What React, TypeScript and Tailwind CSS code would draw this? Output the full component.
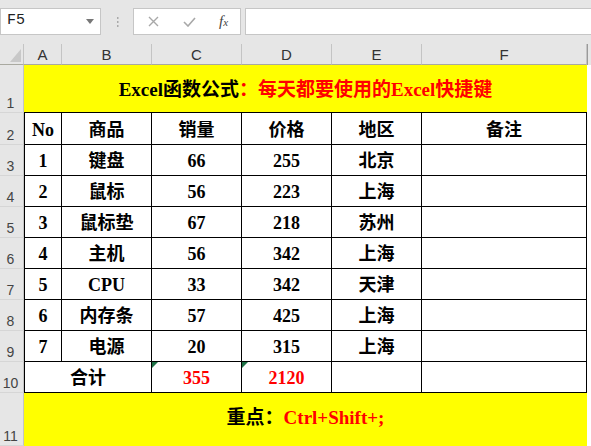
import React from "react";

const serif = "[font-family:'Liberation_Serif','Noto_Sans_CJK_SC',serif]";

type Item = { no: string; name: string; qty: string; price: string; area: string };

const items: Item[] = [
  { no: "1", name: "键盘", qty: "66", price: "255", area: "北京" },
  { no: "2", name: "鼠标", qty: "56", price: "223", area: "上海" },
  { no: "3", name: "鼠标垫", qty: "67", price: "218", area: "苏州" },
  { no: "4", name: "主机", qty: "56", price: "342", area: "上海" },
  { no: "5", name: "CPU", qty: "33", price: "342", area: "天津" },
  { no: "6", name: "内存条", qty: "57", price: "425", area: "上海" },
  { no: "7", name: "电源", qty: "20", price: "315", area: "上海" },
];

function RowHead({ n }: { n: number }) {
  return (
    <div className="flex items-end justify-center pr-[2px] bg-[#e6e6e6] border-r border-b border-r-[#c4c4c4] border-b-[#d6d6d6] text-[14px] leading-[17px] text-[#444] [font-family:'Liberation_Sans',sans-serif]">
      {n}
    </div>
  );
}

function Cell({ children, first, red, mark }: { children?: React.ReactNode; first?: boolean; red?: boolean; mark?: boolean }) {
  return (
    <div
      className={`relative flex items-center justify-center pt-[3px] bg-white border-r border-b border-black text-[18px] font-bold ${serif} ${
        first ? "border-l" : ""
      } ${red ? "text-[#ff0000]" : "text-black"}`}
    >
      {mark && (
        <svg className="absolute left-0 top-0" width="6" height="6" viewBox="0 0 6 6">
          <polygon points="0,0 6,0 0,6" fill="#1e7145" />
        </svg>
      )}
      {children}
    </div>
  );
}

function FormulaBar() {
  return (
    <div className="flex items-center h-[44px] pb-[9px] pt-[8px] bg-[#e6e6e6]">
      <div className="flex items-center w-[101px] h-[27px] bg-white border border-[#c6c6c6] pl-[6px] pr-[6px]">
        <span className="flex-1 text-[15px] text-[#222] [font-family:'Liberation_Mono',monospace]">F5</span>
        <svg width="8" height="5" viewBox="0 0 8 5">
          <polygon points="0,0 8,0 4,5" fill="#777" />
        </svg>
      </div>
      <div className="w-[32px] flex justify-center">
        <svg width="3" height="10" viewBox="0 0 3 10">
          <rect x="1" y="0" width="1.5" height="2" fill="#aaa" />
          <rect x="1" y="4" width="1.5" height="2" fill="#aaa" />
          <rect x="1" y="8" width="1.5" height="2" fill="#aaa" />
        </svg>
      </div>
      <div className="flex items-center w-[108px] h-[27px] bg-white border border-[#c6c6c6]">
        <svg className="ml-[14px]" width="11" height="11" viewBox="0 0 11 11">
          <path d="M1 1 L10 10 M10 1 L1 10" stroke="#a8a8a8" strokeWidth="1.4" fill="none" />
        </svg>
        <svg className="ml-[24px]" width="13" height="10" viewBox="0 0 13 10">
          <path d="M1 5 L5 9 L12 1" stroke="#a8a8a8" strokeWidth="1.6" fill="none" />
        </svg>
        <span className="ml-[23px] italic text-[15px] text-[#444] [font-family:'Liberation_Serif',serif]">
          f<span className="text-[11px]">x</span>
        </span>
      </div>
      <div className="ml-[4px] flex-1 h-[27px] bg-white border-y border-l border-[#c6c6c6]" />
    </div>
  );
}

export default function App() {
  const letters = ["A", "B", "C", "D", "E", "F"];
  return (
    <div className="w-[591px] h-[446px] overflow-hidden bg-white">
      <FormulaBar />
      <div className="flex">
        <div className="w-[587px] grid grid-cols-[24px_38px_90px_90px_90px_90px_165px] grid-rows-[21px_48px_32px_31px_31px_31px_31px_31px_31px_31px_31px_53px]">
          {/* column headers */}
          <div className="relative bg-[#e6e6e6] border-r border-b border-r-[#c4c4c4] border-b-[#a9a9a0]">
            <svg className="absolute right-[2px] bottom-[2px]" width="11" height="13" viewBox="0 0 11 13">
              <polygon points="11,0 11,13 0,13" fill="#c8c8c8" />
            </svg>
          </div>
          {letters.map((l) => (
            <div
              key={l}
              className="flex items-end justify-center bg-[#e6e6e6] border-r border-b border-r-[#c4c4c4] border-b-[#a9a9a0] text-[15px] leading-[18px] text-[#333] [font-family:'Liberation_Sans',sans-serif]"
            >
              {l}
            </div>
          ))}

          {/* row 1 */}
          <RowHead n={1} />
          <div className={`col-span-6 flex items-center justify-center pt-[3px] bg-[#ffff00] border-b border-black text-[19px] font-bold ${serif}`}>
            <span className="text-black">Excel函数公式</span>
            <span className="text-[#ff0000]">：每天都要使用的Excel快捷键</span>
          </div>

          {/* row 2 */}
          <RowHead n={2} />
          <Cell first>No</Cell>
          <Cell>商品</Cell>
          <Cell>销量</Cell>
          <Cell>价格</Cell>
          <Cell>地区</Cell>
          <Cell>备注</Cell>

          {items.map((it, i) => (
            <React.Fragment key={it.no}>
              <RowHead n={i + 3} />
              <Cell first>{it.no}</Cell>
              <Cell>{it.name}</Cell>
              <Cell>{it.qty}</Cell>
              <Cell>{it.price}</Cell>
              <Cell>{it.area}</Cell>
              <Cell />
            </React.Fragment>
          ))}

          {/* row 10 */}
          <RowHead n={10} />
          <div className={`col-span-2 flex items-center justify-center pt-[3px] bg-white border-l border-r border-b border-black text-[18px] font-bold ${serif}`}>
            合计
          </div>
          <Cell red mark>355</Cell>
          <Cell red mark>2120</Cell>
          <Cell />
          <Cell />

          {/* row 11 */}
          <RowHead n={11} />
          <div className={`col-span-6 flex items-center justify-center pb-[2px] bg-[#ffff00] text-[19px] font-bold ${serif}`}>
            <span className="text-black">重点：</span>
            <span className="text-[#ff0000]">Ctrl+Shift+;</span>
          </div>
        </div>
        <div className="flex-1 flex flex-col">
          <div className="h-[21px] bg-[#e6e6e6] border-l border-[#9a9a9a]" />
          <div className="flex-1 bg-white" />
        </div>
      </div>
    </div>
  );
}
